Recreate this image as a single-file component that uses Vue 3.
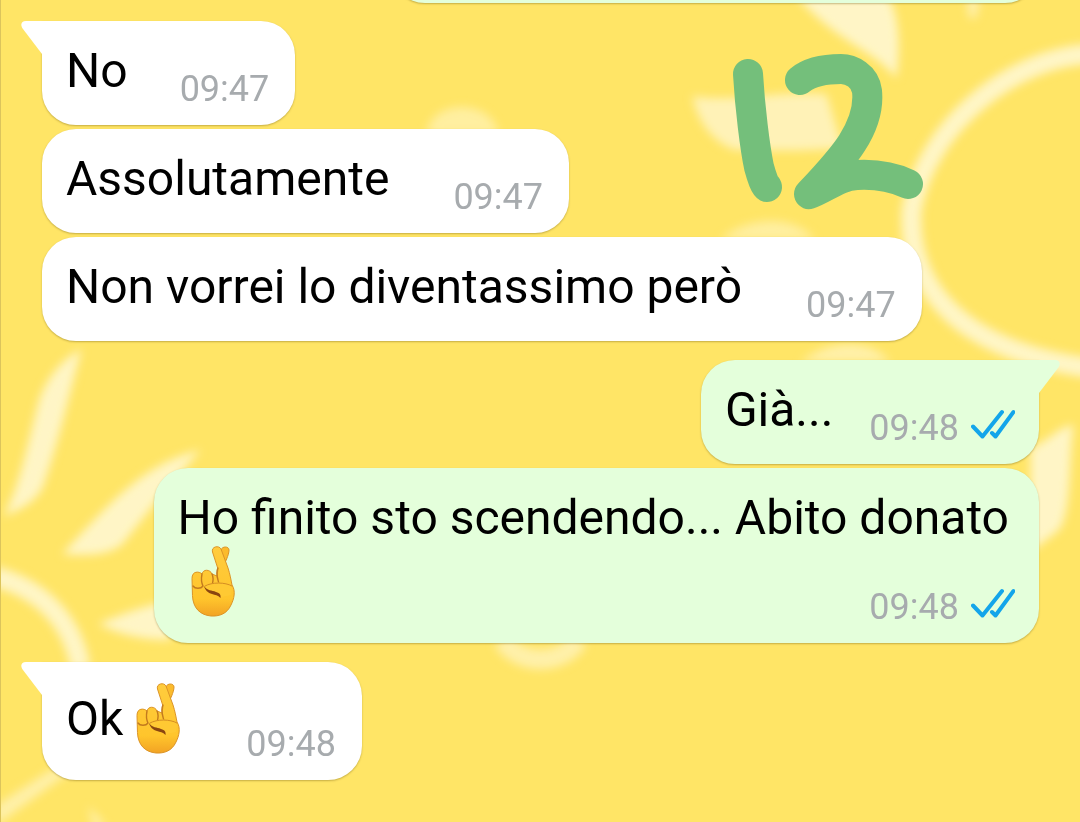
<script setup>
const groups = [
  {
    side: 'in',
    messages: [
      { lines: ['No'], time: '09:47', space: 'medium' },
      { lines: ['Assolutamente'], time: '09:47', space: 'wide' },
      { lines: ['Non vorrei lo diventassimo però'], time: '09:47', space: 'wide' },
    ],
  },
  {
    side: 'out',
    messages: [
      { lines: ['Già...'], time: '09:48', space: 'narrow' },
      { lines: ['Ho finito sto scendendo... Abito donato', ''], emoji: true, time: '09:48', space: 'narrow' },
    ],
  },
  {
    side: 'in',
    messages: [{ lines: ['Ok'], emoji: true, time: '09:48', space: 'wide' }],
  },
]
</script>

<template>
  <main class="chat">
    <svg class="wallpaper" viewBox="0 0 1080 822" preserveAspectRatio="xMidYMin slice" aria-hidden="true">
      <defs>
        <filter id="soft" x="-20%" y="-20%" width="140%" height="140%">
          <feGaussianBlur stdDeviation="5" />
        </filter>
      </defs>
      <g filter="url(#soft)" fill="#fff5c6">
        <path class="ring" d="M1090 54C1010 57 925 128 911 210C907 285 955 350 1090 368" />
        <path class="ring" d="M-8 576C40 588 72 620 80 668" />
        <path class="ring faint" d="M502 640C520 666 560 666 578 640" />
        <path d="M795 -5C835 42 870 48 896 78C902 35 895 5 886 -5Z" />
        <path d="M692 96C730 103 780 90 826 94L842 148C800 152 760 150 735 150C710 142 696 118 692 96Z" opacity=".85" />
        <path d="M720 240C740 220 790 210 815 240Z" opacity=".6" />
        <path d="M800 362C830 338 870 338 890 362Z" opacity=".7" />
        <path d="M1030 448C1050 440 1060 425 1073 425C1068 460 1072 520 1056 532L1030 552Z" />
        <path d="M81 349C60 360 45 380 38 402C27 445 18 490 3 516C20 510 34 502 42 488C56 450 70 390 81 349Z" />
        <path d="M200 450C150 462 120 490 62 554C84 556 108 556 122 544L165 490Z" />
        <path d="M98 624C120 614 145 606 170 600V640C140 640 118 634 98 624Z" />
        <path d="M-5 806L50 770H72L-5 826Z" opacity=".7" />
        <path d="M88 806L106 826H92Z" opacity=".7" />
        <path d="M426 134C430 98 492 98 498 134Z" opacity=".6" />
        <path d="M966 -5H980L976 18H968Z" opacity=".7" />
      </g>
    </svg>

    <div class="bubble out previous"></div>

    <section v-for="(group, g) in groups" :key="g" class="group" :class="group.side">
      <article v-for="(msg, m) in group.messages" :key="m" class="bubble" :class="group.side">
        <svg v-if="m === 0" class="tail" viewBox="0 0 24 34" aria-hidden="true">
          <path d="M24 0H5C0 0-1 4 2 8L21 33H24Z" />
        </svg>
        <p v-for="line in msg.lines.slice(0, -1)" :key="line" class="line">{{ line }}</p>
        <div class="last" :class="msg.space">
          <p class="body">
            <span>{{ msg.lines[msg.lines.length - 1] }}</span>
            <svg v-if="msg.emoji" class="emoji" viewBox="10 11 44 71" role="img" aria-label="🤞">
              <defs>
                <linearGradient id="skin" x1="0" y1="0" x2="0" y2="1">
                  <stop offset="0" stop-color="#ffcc3e" />
                  <stop offset=".75" stop-color="#ffc52c" />
                  <stop offset="1" stop-color="#f2a324" />
                </linearGradient>
              </defs>
              <g stroke="#dc9426" stroke-width="1" stroke-linejoin="round" stroke-linecap="round">
                <path fill="#fbbb2c" d="M36 47L40 15C41 11 48 11 48 15C48 20 44 28 41 33L38 48Z" />
                <path fill="url(#skin)" d="M11 43C11 36 18 36 21 39C22 34 29 34 31 39L36 41L37 34L31.500 17C30 11.500 38 10 40 14L47 33C49 39 50 45 51 50C55 56 53 64 50 70C46 79 38 81.500 30 81C19 80 12 73 11.500 61Z" />
                <path fill="none" stroke="#c27a1e" stroke-width="1.400" d="M37 33C34 38 37 44 38 49M31 39C33 43 32 47 31 50M21 39C20 44 21 49 22 51M12 51C14 54 20 54 22 51" />
                <path fill="#ffc933" stroke="none" d="M24 51C31 46 44 47 51 51L50 60L40 62C38 57 27 58 24 51Z" />
                <path fill="none" stroke="#d58d23" d="M24 51C31 47 44 47 51 51" />
                <path fill="#8a4510" stroke="none" d="M23 51C26 56 31 55 35 57C39 58 40 60 39.500 63C37 60 34 60 31 59C27 58 24 55 23 51Z" />
              </g>
            </svg>
          </p>
          <div class="meta">
            <time>{{ msg.time }}</time>
            <svg v-if="group.side === 'out'" class="ticks" viewBox="1 0 44 30" role="img" aria-label="Letto">
              <path d="M3 17.500L12.500 27.500L32 3M22 24L25.500 27.500L43.500 3" />
            </svg>
          </div>
        </div>
      </article>
    </section>

    <svg class="doodle" viewBox="0 0 194 160" role="img" aria-label="12">
      <path d="M17 21C19 55 24 95 28 114C31 125 34 133 36 134" />
      <path d="M69 27C80 18 94 16 110 16C120 16 134 23 136 38C138 57 130 76 121 90C111 106 93 125 78 141C95 135 107 123 126 122C145 121 160 123 177 131" />
    </svg>
  </main>
</template>

<style>
body {
  margin: 0;
  background: #ffe566;
}
</style>

<style scoped>
.chat {
  position: relative;
  display: flex;
  flex-direction: column;
  gap: 19px;
  box-sizing: border-box;
  min-height: 100vh;
  padding: 0 41px 41px;
  overflow: hidden;
  background: #ffe566;
  border-left: 1px solid #dcc45c;
  font-family: Roboto, sans-serif;
  color: #000;
}
.wallpaper {
  position: absolute;
  inset: 0;
  width: 100%;
  height: 100%;
}
.ring {
  fill: none;
  stroke: #fff5c6;
  stroke-width: 20;
}
.faint {
  opacity: .7;
}
.group {
  display: flex;
  flex-direction: column;
  gap: 4px;
  align-items: flex-start;
}
.group.out {
  align-items: flex-end;
}
.bubble {
  position: relative;
  box-sizing: border-box;
  padding: 21px 26px 15px 24px;
  border-radius: 34px;
  background: #fff;
  box-shadow: 0 1px 2px rgba(90, 70, 0, .35);
}
.bubble.out {
  padding-right: 24px;
  background: #e4ffdb;
}
.bubble.previous {
  align-self: flex-end;
  width: 65%;
  height: 104px;
  margin-top: -101px;
  margin-bottom: -1px;
}
.in .bubble:first-child {
  border-top-left-radius: 0;
}
.out .bubble:first-child {
  border-top-right-radius: 0;
}
.tail {
  position: absolute;
  top: 0;
  left: -21px;
  width: 24px;
  height: 34px;
  fill: #fff;
}
.out .tail {
  left: auto;
  right: -21px;
  transform: scaleX(-1);
  fill: #e4ffdb;
}
.line,
.body {
  margin: 0;
  font-size: 48px;
  line-height: 57px;
}
.line {
  margin-right: 6px;
}
.last {
  display: flex;
  justify-content: space-between;
  align-items: flex-end;
}
.narrow {
  gap: 36px;
}
.medium {
  gap: 52px;
}
.wide {
  gap: 64px;
}
.body {
  display: flex;
  align-items: center;
  margin-bottom: 11px;
}
.emoji {
  width: 44px;
  height: 71px;
  margin: 0 2px 0 13px;
}
.meta {
  display: flex;
  align-items: center;
  gap: 12px;
  font-size: 36px;
  line-height: 42px;
  color: #a7abae;
}
.ticks {
  width: 44px;
  height: 30px;
  margin-bottom: 9px;
  fill: none;
  stroke: #13a5ea;
  stroke-width: 4;
  stroke-linejoin: round;
  stroke-linecap: round;
}
.doodle {
  position: absolute;
  top: 53px;
  right: 155px;
  width: 194px;
  height: 160px;
  fill: none;
  stroke: #74bf7b;
  stroke-width: 30;
  stroke-linecap: round;
  stroke-linejoin: round;
}
</style>
